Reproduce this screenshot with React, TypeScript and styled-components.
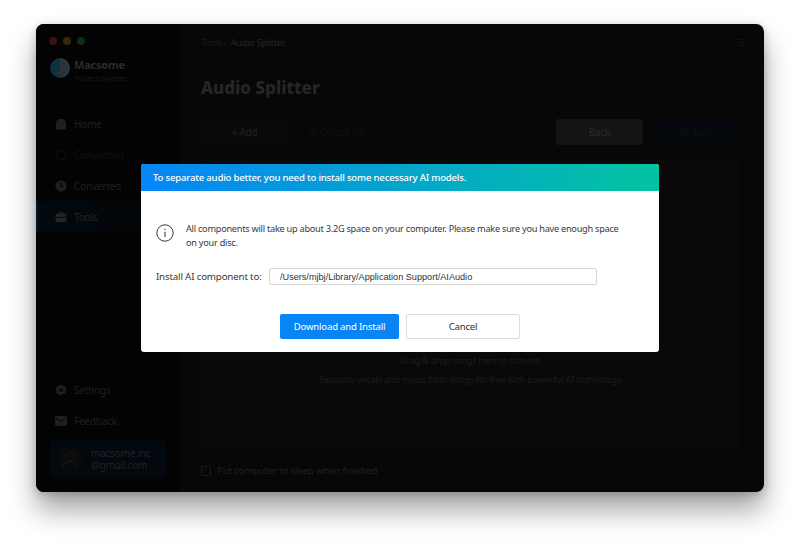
import styled, { createGlobalStyle } from "styled-components";
import { Trash2 } from "lucide-react";

const GlobalStyle = createGlobalStyle`
  html, body { margin: 0; padding: 0; background: #fff; }
  * { box-sizing: border-box; }
  body { font-family: "Noto Sans", "Open Sans", sans-serif; letter-spacing: -0.2px; }
`;

const HomeIcon = () => (
  <svg width="12" height="12" viewBox="0 0 12 12">
    <path d="M6 .8C8.6.8 10.8 2.8 11 5.4V11.4H1V5.4C1.2 2.8 3.4.8 6 .8Z" fill="currentColor" />
  </svg>
);

const ConvertingIcon = () => (
  <svg width="12" height="12" viewBox="0 0 12 12" fill="none">
    <circle cx="6" cy="6" r="4.8" stroke="currentColor" strokeWidth="1.2" />
  </svg>
);

const ClockIcon = () => (
  <svg width="12" height="12" viewBox="0 0 12 12">
    <circle cx="6" cy="6" r="5.6" fill="currentColor" />
    <path d="M6 2.8V6.4H8.6" fill="none" stroke="#030303" strokeWidth="1.1" />
  </svg>
);

const ToolsIcon = () => (
  <svg width="12" height="12" viewBox="0 0 12 12">
    <path d="M4 3V1.4H8V3" fill="none" stroke="currentColor" />
    <rect x=".5" y="2.6" width="11" height="8.4" rx="2" fill="currentColor" />
    <path d="M.5 6.4H11.5" stroke="#030303" strokeWidth=".8" />
  </svg>
);

const GearIcon = () => (
  <svg width="12" height="12" viewBox="0 0 12 12">
    <path
      fillRule="evenodd"
      d="M6 .4 10.8 3.2V8.8L6 11.6 1.2 8.8V3.2ZM6 4.2A1.8 1.8 0 1 0 6 7.8 1.8 1.8 0 1 0 6 4.2Z"
      fill="currentColor"
    />
  </svg>
);

const MailIcon = () => (
  <svg width="12" height="10" viewBox="0 0 12 10">
    <rect width="12" height="10" rx="1.6" fill="currentColor" />
    <path d="M1.5 2.4 6 5.6 10.5 2.4" fill="none" stroke="#030303" />
  </svg>
);

const LogoIcon = () => (
  <svg width="20" height="20" viewBox="0 0 20 20">
    <circle cx="10" cy="10" r="10" fill="#0f3042" />
    <path d="M10 0A10 10 0 0 1 20 10 10 10 0 0 1 10 20Z" fill="#26343c" />
    <path d="M10.5 3.5C11.5 6 14 6 15 7.5L14.4 9C13 8.2 12.2 8 11.8 7.8V14.5C11.8 16 10.4 17 8.8 17 7.4 17 6.4 16.2 6.4 15 6.4 13.6 7.8 12.8 9.2 12.8 9.7 12.8 10.1 12.9 10.5 13Z" fill="#323232" />
  </svg>
);

const AvatarIcon = () => (
  <svg width="26" height="26" viewBox="0 0 26 26" fill="none" stroke="#161616" strokeWidth="1.2">
    <circle cx="13" cy="10.5" r="4" />
    <path d="M5.5 21C6.5 17 9.5 15.6 13 15.6S19.5 17 20.5 21" />
  </svg>
);

const InfoIcon = () => (
  <svg width="18" height="18" viewBox="0 0 18 18" fill="none" stroke="#3c3c3c">
    <circle cx="9" cy="9" r="8.2" />
    <path d="M9 7.8V13" strokeWidth="1.1" />
    <path d="M9 4.8V6" strokeWidth="1.1" />
  </svg>
);

const NAV_TOP = [
  { label: "Home", icon: <HomeIcon />, tone: "#1f1f1f" },
  { label: "Converting", icon: <ConvertingIcon />, tone: "#101010" },
  { label: "Converted", icon: <ClockIcon />, tone: "#1f1f1f" },
  { label: "Tools", icon: <ToolsIcon />, tone: "#242424", active: true },
];

const NAV_BOTTOM = [
  { label: "Settings", icon: <GearIcon />, tone: "#1f1f1f" },
  { label: "Feedback", icon: <MailIcon />, tone: "#1f1f1f" },
];

export default function App() {
  return (
    <Page>
      <GlobalStyle />
      <Window>
        <Sidebar>
          <TrafficLights>
            <Light $color="#3a1210" />
            <Light $color="#38280b" />
            <Light $color="#0d2e14" />
          </TrafficLights>
          <Brand>
            <LogoIcon />
            <BrandText>
              <BrandName>Macsome</BrandName>
              <BrandSub>iTunes Converter</BrandSub>
            </BrandText>
          </Brand>
          <Nav>
            {NAV_TOP.map((item) => (
              <NavItem key={item.label} $tone={item.tone} $active={item.active}>
                <NavIcon>{item.icon}</NavIcon>
                {item.label}
              </NavItem>
            ))}
          </Nav>
          <BottomNav>
            {NAV_BOTTOM.map((item) => (
              <NavItem key={item.label} $tone={item.tone}>
                <NavIcon>{item.icon}</NavIcon>
                {item.label}
              </NavItem>
            ))}
          </BottomNav>
          <Account>
            <Avatar>
              <AvatarIcon />
            </Avatar>
            <AccountMail>
              macsome.inc
              <br />
              @gmail.com
            </AccountMail>
          </Account>
        </Sidebar>

        <Main>
          <TopBar>
            <Crumbs>
              <CrumbRoot>Tools ›</CrumbRoot>
              <CrumbCurrent>Audio Splitter</CrumbCurrent>
            </Crumbs>
            <MenuLines>☰</MenuLines>
          </TopBar>
          <Title>Audio Splitter</Title>
          <Toolbar>
            <ToolButton $bg="#0a0a0a" $color="#202020">+ Add</ToolButton>
            <GhostButton>
              <Trash2 size={9} />
              Delete All
            </GhostButton>
            <ToolSpacer />
            <ToolButton $bg="#131313" $color="#2a2a2a">Back</ToolButton>
            <ToolButton $bg="#04080c" $color="#0a1218">AI Split</ToolButton>
          </Toolbar>
          <DropPanel>
            <DropTitle>Drag &amp; drop songs here to convert</DropTitle>
            <DropTitle>Separate vocals and music from songs for free with powerful AI technology</DropTitle>
          </DropPanel>
          <SleepRow>
            <SleepBox />
            Put computer to sleep when finished
          </SleepRow>
        </Main>

        <Modal>
          <ModalHeader>To separate audio better, you need to install some necessary AI models.</ModalHeader>
          <ModalBody>
            <InfoRow>
              <InfoGlyph>
                <InfoIcon />
              </InfoGlyph>
              <InfoText>
                All components will take up about 3.2G space on your computer. Please make sure you have enough space
                on your disc.
              </InfoText>
            </InfoRow>
            <PathRow>
              <PathLabel>Install AI component to:</PathLabel>
              <PathInput>/Users/mjbj/Library/Application Support/AIAudio</PathInput>
            </PathRow>
            <Actions>
              <PrimaryButton>Download and Install</PrimaryButton>
              <CancelButton>Cancel</CancelButton>
            </Actions>
          </ModalBody>
        </Modal>
      </Window>
    </Page>
  );
}

const Page = styled.div`
  width: 800px;
  height: 540px;
  padding: 24px 36px 48px;
  overflow: hidden;
`;

const Window = styled.div`
  position: relative;
  width: 728px;
  height: 468px;
  display: flex;
  background: #070707;
  border-radius: 8px;
  box-shadow: 0 18px 28px rgba(0, 0, 0, 0.36), 0 2px 10px rgba(0, 0, 0, 0.2);
`;

const Sidebar = styled.aside`
  width: 144px;
  flex: none;
  display: flex;
  flex-direction: column;
  background: #030303;
  border-radius: 8px 0 0 8px;
  padding-bottom: 14px;
`;

const TrafficLights = styled.div`
  display: flex;
  gap: 6px;
  padding: 13px 0 0 13px;
`;

const Light = styled.span<{ $color: string }>`
  width: 8px;
  height: 8px;
  border-radius: 50%;
  background: ${(p) => p.$color};
`;

const Brand = styled.div`
  display: flex;
  align-items: center;
  gap: 4px;
  padding-left: 14px;
  height: 46px;
`;

const BrandText = styled.div`
  display: flex;
  flex-direction: column;
  padding-top: 6px;
`;

const BrandName = styled.div`
  font-size: 11px;
  font-weight: 700;
  line-height: 16px;
  color: #2a2a2a;
`;

const BrandSub = styled.div`
  font-size: 7px;
  line-height: 12px;
  color: #191919;
`;

const Nav = styled.nav`
  display: flex;
  flex-direction: column;
  margin-top: 17px;
`;

const BottomNav = styled(Nav)`
  margin-top: auto;
`;

const NavItem = styled.div<{ $tone: string; $active?: boolean }>`
  height: 31px;
  display: flex;
  align-items: center;
  gap: 7px;
  padding-left: 19px;
  font-size: 10px;
  color: ${(p) => p.$tone};
  background: ${(p) => (p.$active ? "linear-gradient(90deg, #02090f, #030405)" : "transparent")};
  box-shadow: ${(p) => (p.$active ? "inset 2px 0 0 #031625" : "none")};
`;

const NavIcon = styled.span`
  width: 12px;
  display: flex;
  justify-content: center;
`;

const Account = styled.div`
  margin: 4px 0 0 14px;
  width: 116px;
  height: 38px;
  display: flex;
  align-items: center;
  gap: 8px;
  padding-left: 7px;
  border-radius: 4px;
  background: #02080d;
`;

const Avatar = styled.div`
  width: 26px;
  height: 26px;
  border-radius: 50%;
  background: #0a0a0a;
`;

const AccountMail = styled.div`
  font-size: 10px;
  line-height: 12.5px;
  color: #222;
`;

const Main = styled.main`
  flex: 1;
  min-width: 0;
  display: flex;
  flex-direction: column;
  padding: 0 25px 0 21px;
`;

const TopBar = styled.div`
  height: 36px;
  display: flex;
  align-items: center;
  justify-content: space-between;
`;

const Crumbs = styled.div`
  display: flex;
  gap: 4px;
  font-size: 9px;
`;

const CrumbRoot = styled.span`
  color: #191919;
`;

const CrumbCurrent = styled.span`
  color: #262626;
`;

const MenuLines = styled.span`
  font-size: 9px;
  color: #141414;
  margin-right: -6px;
`;

const Title = styled.h1`
  margin: 14px 0 0;
  height: 28px;
  font-size: 17px;
  line-height: 28px;
  font-weight: 800;
  letter-spacing: 0;
  color: #262626;
`;

const Toolbar = styled.div`
  margin-top: 17px;
  display: flex;
  gap: 9px;
  height: 26px;
`;

const ToolSpacer = styled.div`
  flex: 1;
`;

const ToolButton = styled.div<{ $bg: string; $color: string }>`
  width: 87px;
  display: flex;
  align-items: center;
  justify-content: center;
  gap: 3px;
  border-radius: 2px;
  font-size: 10px;
  background: ${(p) => p.$bg};
  color: ${(p) => p.$color};
`;

const GhostButton = styled(ToolButton).attrs({ $bg: "transparent", $color: "#111" })`
  width: 78px;
`;

const DropPanel = styled.section`
  margin-top: 13px;
  height: 292px;
  display: flex;
  flex-direction: column;
  align-items: center;
  justify-content: flex-end;
  gap: 4px;
  padding-bottom: 63px;
  border-radius: 2px;
  background: #090909;
`;

const DropTitle = styled.div`
  font-size: 9px;
  line-height: 15px;
  color: #1c1c1c;
`;

const SleepRow = styled.label`
  margin-top: 14px;
  display: flex;
  align-items: center;
  gap: 6px;
  font-size: 9.7px;
  color: #202020;
`;

const SleepBox = styled.span`
  width: 10px;
  height: 10px;
  border: 1px solid #1a1a1a;
  border-radius: 1px;
`;

const Modal = styled.div`
  position: absolute;
  left: 105px;
  top: 140px;
  width: 518px;
  height: 188px;
  display: flex;
  flex-direction: column;
  background: #fff;
  border-radius: 3px;
  overflow: hidden;
`;

const ModalHeader = styled.div`
  height: 27px;
  flex: none;
  display: flex;
  align-items: center;
  padding-left: 12px;
  font-size: 9.6px;
  font-weight: 500;
  color: #fff;
  background: linear-gradient(90deg, #0586f6 0%, #03c3a2 100%);
`;

const ModalBody = styled.div`
  flex: 1;
  display: flex;
  flex-direction: column;
  padding: 31px 15px 13px;
  color: #3a3a3a;
`;

const InfoRow = styled.div`
  display: flex;
  align-items: flex-start;
  gap: 12px;
`;

const InfoGlyph = styled.span`
  display: flex;
  padding-top: 2px;
`;

const InfoText = styled.p`
  margin: 0;
  width: 436px;
  font-size: 9.2px;
  line-height: 14px;
  letter-spacing: -0.26px;
`;

const PathRow = styled.div`
  margin-top: 18px;
  display: flex;
  align-items: center;
  gap: 8px;
`;

const PathLabel = styled.span`
  width: 105px;
  font-size: 9.8px;
  white-space: nowrap;
`;

const PathInput = styled.div`
  width: 328px;
  height: 17px;
  display: flex;
  align-items: center;
  padding-left: 10px;
  border: 1px solid #d6d6d6;
  border-radius: 2px;
  font-family: "Liberation Sans", Arial, sans-serif;
  font-size: 9.15px;
  letter-spacing: 0;
  color: #333;
`;

const Actions = styled.div`
  margin-top: auto;
  display: flex;
  gap: 7px;
  padding-left: 124px;
`;

const PrimaryButton = styled.div`
  width: 119px;
  height: 25px;
  display: flex;
  align-items: center;
  justify-content: center;
  border-radius: 2px;
  font-size: 9.6px;
  color: #fff;
  background: #0984f4;
`;

const CancelButton = styled(PrimaryButton)`
  width: 114px;
  color: #333;
  background: #fff;
  border: 1px solid #dcdcdc;
`;
